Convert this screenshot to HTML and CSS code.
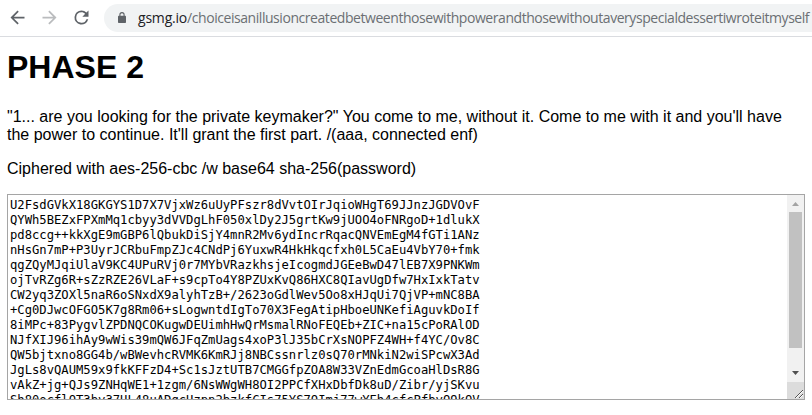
FILE: index.html
```html
<!DOCTYPE html>
<html lang="en">
<head>
<meta charset="utf-8">
<title>Phase 2</title>
<link rel="stylesheet" href="styles.css">
</head>
<body>
<header class="toolbar">
  <svg class="nav" viewBox="0 0 24 24"><path d="M20 11H7.83l5.59-5.59L12 4l-8 8 8 8 1.41-1.41L7.83 13H20z"/></svg>
  <svg class="nav disabled" viewBox="0 0 24 24"><path d="M12 4l-1.41 1.41L16.17 11H4v2h12.17l-5.58 5.59L12 20l8-8z"/></svg>
  <svg class="nav" viewBox="0 0 24 24"><path d="M17.65 6.35A7.96 7.96 0 0 0 12 4a8 8 0 1 0 7.73 10h-2.08A6 6 0 1 1 12 6c1.66 0 3.14.69 4.22 1.78L13 11h7V4z"/></svg>
  <div class="address">
    <svg class="lock" viewBox="0 0 8 11"><path d="M1.9 4.5V2.7a2.1 2.1 0 0 1 4.2 0v1.8" fill="none" stroke="#5f6368" stroke-width="1.1"/><rect y="3.8" width="8" height="7.2" rx=".8"/></svg>
    <span class="url"><span class="host">gsmg.io</span>/choiceisanillusioncreatedbetweenthosewithpowerandthosewithoutaveryspecialdessertiwroteitmyself</span>
  </div>
</header>
<main>
  <h1>PHASE 2</h1>
  <p>"1... are you looking for the private keymaker?" You come to me, without it. Come to me with it and you'll have<br>the power to continue. It'll grant the first part. /(aaa, connected enf)</p>
  <p>Ciphered with aes-256-cbc /w base64 sha-256(password)</p>
  <div class="box">
<pre>U2FsdGVkX18GKGYS1D7X7VjxWz6uUyPFszr8dVvtOIrJqioWHgT69JJnzJGDVOvF
QYWh5BEZxFPXmMq1cbyy3dVVDgLhF050xlDy2J5grtKw9jUOO4oFNRgoD+1dlukX
pd8ccg++kkXgE9mGBP6lQbukDiSjY4mnR2Mv6ydIncrRqacQNVEmEgM4fGTi1ANz
nHsGn7mP+P3UyrJCRbuFmpZJc4CNdPj6YuxwR4HkHkqcfxh0L5CaEu4VbY70+fmk
qgZQyMJqiUlaV9KC4UPuRVj0r7MYbVRazkhsjeIcogmdJGEeBwD47lEB7X9PNKWm
ojTvRZg6R+sZzRZE26VLaF+s9cpTo4Y8PZUxKvQ86HXC8QIavUgDfw7HxIxkTatv
CW2yq3ZOXl5naR6oSNxdX9alyhTzB+/2623oGdlWev5Oo8xHJqUi7QjVP+mNC8BA
+Cg0DJwcOFGO5K7g8Rm06+sLogwntdIgTo70X3FegAtipHboeUNKefiAguvkDoIf
8iMPc+83PygvlZPDNQCOKugwDEUimhHwQrMsmalRNoFEQEb+ZIC+na15cPoRAlOD
NJfXIJ96ihAy9wWis39mQW6JFqZmUags4xoP3lJ35bCrXsNOPFZ4WH+f4YC/Ov8C
QW5bjtxno8GG4b/wBWevhcRVMK6KmRJj8NBCssnrlz0sQ70rMNkiN2wiSPcwX3Ad
JgLs8vQAUM59x9fkKFFzD4+Sc1sJztUTB7CMGGfpZOA8W33VZnEdmGcoaHlDsR8G
vAkZ+jg+QJs9ZNHqWE1+1zgm/6NsWWgWH8OI2PPCfXHxDbfDk8uD/Zibr/yjSKvu
Sh80ocflQT3by37UL48uADgcUzpn2bzkfCIs75YS7OImj77wYEh4cfcPfbyO9kQV</pre>
    <div class="scrollbar">
      <svg class="arrow" viewBox="0 0 17 17"><path d="M5 11h7L8.5 7z" fill="#a3a3a3"/></svg>
      <div class="thumb"></div>
      <svg class="arrow" viewBox="0 0 17 17"><path d="M5 6h7l-3.500 4z" fill="#505050"/></svg>
      <svg class="grip" viewBox="0 0 17 17" shape-rendering="crispEdges"><path d="M8 16l8-8M12 16l4-4" stroke="#555"/><path d="M9 16l7-7M13 16l3-3" stroke="#fff"/></svg>
    </div>
  </div>
</main>
</body>
</html>
```
FILE: styles.css
```css
* { box-sizing: border-box; }
body { margin: 0; height: 415px; overflow: hidden; background: #fff; color: #000; font-family: "Liberation Sans", Arial, sans-serif; font-size: 16px; }
svg { display: block; flex: none; }
.toolbar { display: flex; align-items: center; height: 37px; padding: 0 0 1px 7px; border-bottom: 1px solid #dadce0; }
.nav { width: 21px; height: 21px; margin-right: 11px; fill: #5f6368; }
.nav.disabled { fill: #babcbe; }
.address { display: flex; align-items: center; flex: 1; min-width: 0; height: 28px; margin-left: 1px; padding-left: 14px; border-radius: 14px 0 0 14px; background: #f1f3f4; }
.lock { width: 8px; height: 11px; margin-right: 12px; fill: #5f6368; }
.url { font-family: "Open Sans", "Noto Sans", sans-serif; font-size: 14px; line-height: 20px; white-space: nowrap; color: #6b6f73; letter-spacing: -0.445px; }
.host { color: #202124; letter-spacing: -0.2px; }
main { padding: 10px 7px 0; }
h1 { margin: 0; font-size: 32px; line-height: 40px; }
p { margin: 0; line-height: 18px; white-space: nowrap; }
h1 + p { margin-top: 21px; }
p + p { margin-top: 16px; }
.box { display: flex; width: 798px; height: 206px; margin-top: 16px; border: 1px solid #a5a5a5; overflow: hidden; }
pre { flex: 1; margin: 0; padding: 3px 2px 0; overflow: hidden; font: 12.19px/15px "DejaVu Sans Mono", monospace; }
.scrollbar { display: flex; flex-direction: column; width: 17px; height: 204px; background: #f1f1f1; }
.arrow { width: 17px; height: 17px; }
.thumb { width: 13px; height: 136px; margin: 0 2px 17px; background: #c1c1c1; }
.grip { width: 17px; height: 17px; background: #dcdcdc; }
```
